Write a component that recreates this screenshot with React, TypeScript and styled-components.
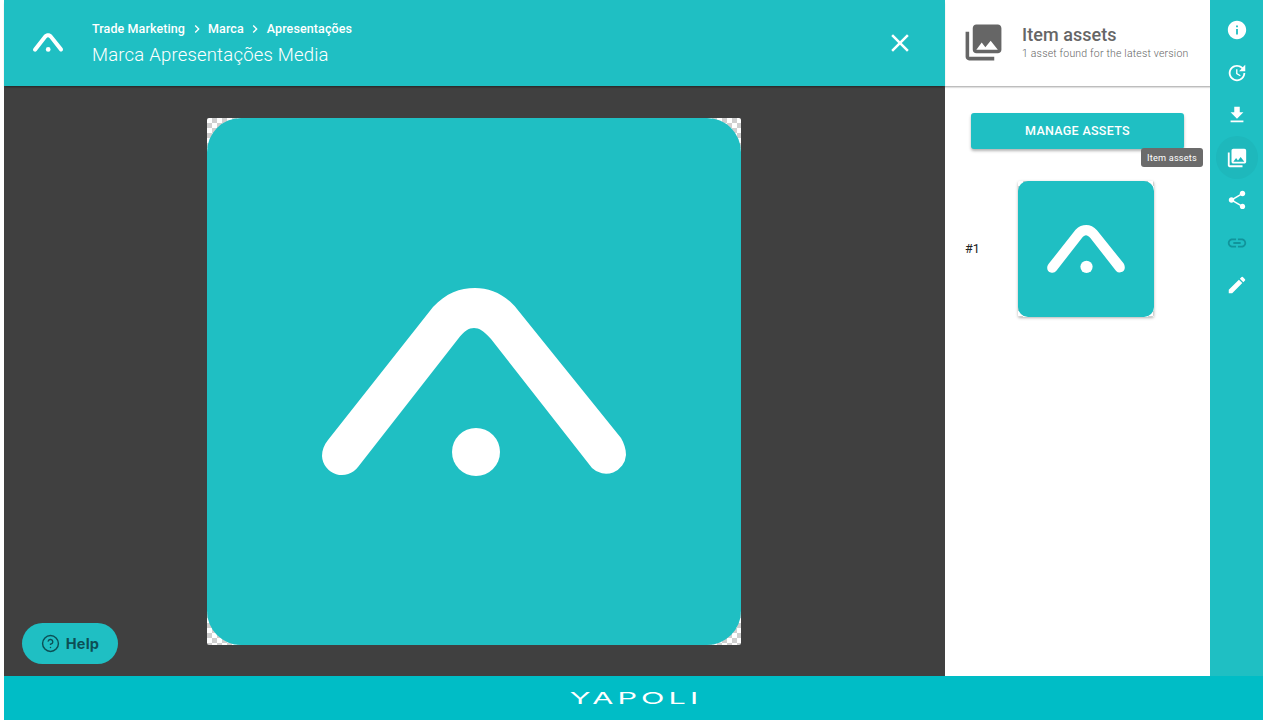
import React from "react";
import styled, { createGlobalStyle } from "styled-components";
import {
  MdInfo,
  MdUpdate,
  MdFileDownload,
  MdPhotoLibrary,
  MdShare,
  MdLink,
  MdEdit,
  MdClose,
  MdChevronRight,
} from "react-icons/md";
import { CircleHelp } from "lucide-react";

const teal = "#1fbfc3";

const Global = createGlobalStyle`
  html, body { margin: 0; padding: 0; background: #fff; }
  body { font-family: Roboto, "Liberation Sans", sans-serif; overflow: hidden; }
`;

const Page = styled.div`
  width: 1267px;
  height: 720px;
  box-sizing: border-box;
  padding: 0 4px;
  display: flex;
  flex-direction: column;
  background: #fff;
`;
const Body = styled.div`
  flex: 1;
  min-height: 0;
  display: flex;
`;
const Stage = styled.main`
  width: 941px;
  display: flex;
  flex-direction: column;
  position: relative;
`;
const Header = styled.header`
  height: 86px;
  flex: none;
  background: ${teal};
  display: flex;
  align-items: center;
  padding: 0 33px 0 29px;
  box-shadow: 0 2px 2px -1px rgba(0, 0, 0, 0.45);
  position: relative;
  z-index: 1;
  color: #fff;
`;
const HeaderLogo = styled.svg`
  width: 30px;
  height: 19px;
  flex: none;
  margin: 0 29px 2px 0;
  overflow: visible;
`;
const Titles = styled.div`
  flex: 1;
  display: flex;
  flex-direction: column;
`;
const Crumbs = styled.nav`
  display: flex;
  align-items: center;
  font-size: 12.5px;
  font-weight: 500;
  line-height: 18px;
  letter-spacing: 0.1px;
  margin-top: 1px;
  svg { width: 16px; height: 16px; margin: 0 3.5px; }
`;
const Title = styled.h1`
  margin: 5px 0 0;
  font-size: 18.5px;
  font-weight: 300;
  line-height: 24px;
  letter-spacing: 0.2px;
`;
const CloseButton = styled.button`
  border: 0;
  background: none;
  color: #fff;
  padding: 0;
  display: flex;
  svg { width: 30px; height: 30px; }
  margin-right: -3px;
`;
const Viewer = styled.div`
  flex: 1;
  min-height: 0;
  background: #404040;
  display: flex;
  align-items: center;
  justify-content: center;
  padding-right: 1px;
`;
const Checker = styled.div<{ $w: number; $h: number; $r: number }>`
  width: ${(p) => p.$w}px;
  height: ${(p) => p.$h}px;
  border-radius: 2px;
  background: repeating-conic-gradient(#cfcfcf 0 25%, #fff 0 50%) 0 0 / 10px 10px;
  display: flex;
  box-shadow: ${(p) => (p.$w < 200 ? "0 1px 3px rgba(0,0,0,.3)" : "none")};
  > div {
    flex: 1;
    background: ${teal};
    border-radius: ${(p) => p.$r}px;
    display: flex;
    align-items: center;
    justify-content: center;
  }
`;
const BigLogo = styled.svg`
  width: 304px;
  height: 188px;
  margin: 0 0 0 -1px;
  position: relative;
  top: 1px;
  overflow: visible;
`;
const HelpButton = styled.button`
  position: absolute;
  left: 18px;
  bottom: 12px;
  width: 96px;
  height: 41px;
  border: 0;
  border-radius: 21px;
  background: ${teal};
  color: #0c4f55;
  font: 700 14.5px Inter, sans-serif;
  display: flex;
  align-items: center;
  justify-content: center;
  gap: 6px;
  padding: 0;
  letter-spacing: 0.2px;
`;
const Panel = styled.aside`
  width: 265px;
  flex: none;
  display: flex;
  flex-direction: column;
  background: #fff;
`;
const PanelHeader = styled.div`
  height: 87px;
  flex: none;
  box-sizing: border-box;
  border-bottom: 1px solid #bdbdbd;
  box-shadow: 0 1px 1px rgba(0, 0, 0, 0.12);
  display: flex;
  align-items: center;
  color: #666;
  padding: 0 0 0 17px;
  > svg { width: 43px; height: 43px; flex: none; margin: 0 17px 2px 0; }
`;
const PanelTitle = styled.div`
  font-size: 18px;
  font-weight: 500;
  line-height: 20px;
  letter-spacing: 0.05px;
`;
const PanelSub = styled.div`
  font-size: 10.5px;
  font-weight: 300;
  line-height: 14px;
  letter-spacing: 0.2px;
  margin-top: 2px;
`;
const ManageButton = styled.button`
  align-self: flex-start;
  margin: 26px 0 0 26px;
  width: 213px;
  height: 36px;
  border: 0;
  border-radius: 3px;
  background: ${teal};
  color: #fff;
  font: 500 12.5px Roboto, sans-serif;
  letter-spacing: 0.3px;
  box-shadow: 0 2px 3px rgba(0, 0, 0, 0.3);
  padding: 0 0 2px;
`;
const AssetRow = styled.div`
  display: flex;
  align-items: center;
  margin: 32px 0 0 20px;
`;
const AssetNum = styled.span`
  width: 53px;
  font-size: 12.5px;
  font-weight: 400;
  color: #222;
  margin-bottom: 2px;
`;
const ThumbLogo = styled.svg`
  width: 78px;
  height: 48px;
  overflow: visible;
`;
const Rail = styled.nav`
  width: 53px;
  flex: none;
  background: ${teal};
  padding-top: 8.75px;
  display: flex;
  flex-direction: column;
  align-items: center;
  position: relative;
`;
const RailButton = styled.button<{ $active?: boolean; $off?: boolean }>`
  width: 42px;
  height: 42.5px;
  flex: none;
  border: 0;
  padding: 0;
  color: ${(p) => (p.$off ? "#11949b" : "#fff")};
  background: ${(p) => (p.$active ? "#1eb8bc" : "transparent")};
  border-radius: 50%;
  display: flex;
  align-items: center;
  justify-content: center;
  svg { width: 22px; height: 22px; }
`;
const Tooltip = styled.div`
  position: absolute;
  right: 60px;
  top: 148px;
  width: 62px;
  height: 19px;
  border-radius: 3px;
  background: #6b6b6b;
  color: #fff;
  font-size: 9.2px;
  letter-spacing: 0.2px;
  display: flex;
  align-items: center;
  justify-content: center;
  z-index: 2;
`;
const Footer = styled.footer`
  height: 44px;
  flex: none;
  background: #00bdc6;
  display: flex;
  align-items: center;
  justify-content: center;
  padding-left: 4px;
`;
const Wordmark = styled.span`
  color: #fff;
  font-size: 18px;
  font-weight: 400;
  font-family: Inter, sans-serif;
  letter-spacing: 2.4px;
  display: inline-block;
  transform: scaleX(1.7) scaleY(0.92);
  line-height: 1;
`;

const Mark = () => (
  <>
    <path
      d="M328 440 L433 307 C446 293 460 288 475 288 C490 288 505 294 517 309 L621 438 C624 443 626 449 626 455 A20 20 0 0 1 592 468 L491 339 C484 331 479 328 474 328 C469 328 464 331 458 339 L358 467 A20 20 0 0 1 322 456 C322 450 324 445 328 440 Z"
      fill="#fff"
    />
    <circle cx="476" cy="452" r="24" fill="#fff" />
  </>
);

export default function App() {
  return (
    <Page>
      <Global />
      <Body>
        <Stage>
          <Header>
            <HeaderLogo viewBox="322 288 304 188">
              <Mark />
            </HeaderLogo>
            <Titles>
              <Crumbs>
                Trade Marketing <MdChevronRight /> Marca <MdChevronRight /> Apresentações
              </Crumbs>
              <Title>Marca Apresentações Media</Title>
            </Titles>
            <CloseButton aria-label="Close">
              <MdClose />
            </CloseButton>
          </Header>
          <Viewer>
            <Checker $w={534} $h={527} $r={34}>
              <div>
                <BigLogo viewBox="322 288 304 188">
                  <Mark />
                </BigLogo>
              </div>
            </Checker>
          </Viewer>
          <HelpButton>
            <CircleHelp size={19} strokeWidth={1.8} />
            Help
          </HelpButton>
        </Stage>
        <Panel>
          <PanelHeader>
            <MdPhotoLibrary />
            <div>
              <PanelTitle>Item assets</PanelTitle>
              <PanelSub>1 asset found for the latest version</PanelSub>
            </div>
          </PanelHeader>
          <ManageButton>MANAGE ASSETS</ManageButton>
          <AssetRow>
            <AssetNum>#1</AssetNum>
            <Checker $w={136} $h={136} $r={10}>
              <div>
                <ThumbLogo viewBox="322 288 304 188">
                  <Mark />
                </ThumbLogo>
              </div>
            </Checker>
          </AssetRow>
        </Panel>
        <Rail>
          <RailButton><MdInfo /></RailButton>
          <RailButton><MdUpdate /></RailButton>
          <RailButton><MdFileDownload /></RailButton>
          <RailButton $active><MdPhotoLibrary /></RailButton>
          <RailButton><MdShare /></RailButton>
          <RailButton $off><MdLink /></RailButton>
          <RailButton><MdEdit /></RailButton>
          <Tooltip>Item assets</Tooltip>
        </Rail>
      </Body>
      <Footer>
        <Wordmark>YAPOLI</Wordmark>
      </Footer>
    </Page>
  );
}
